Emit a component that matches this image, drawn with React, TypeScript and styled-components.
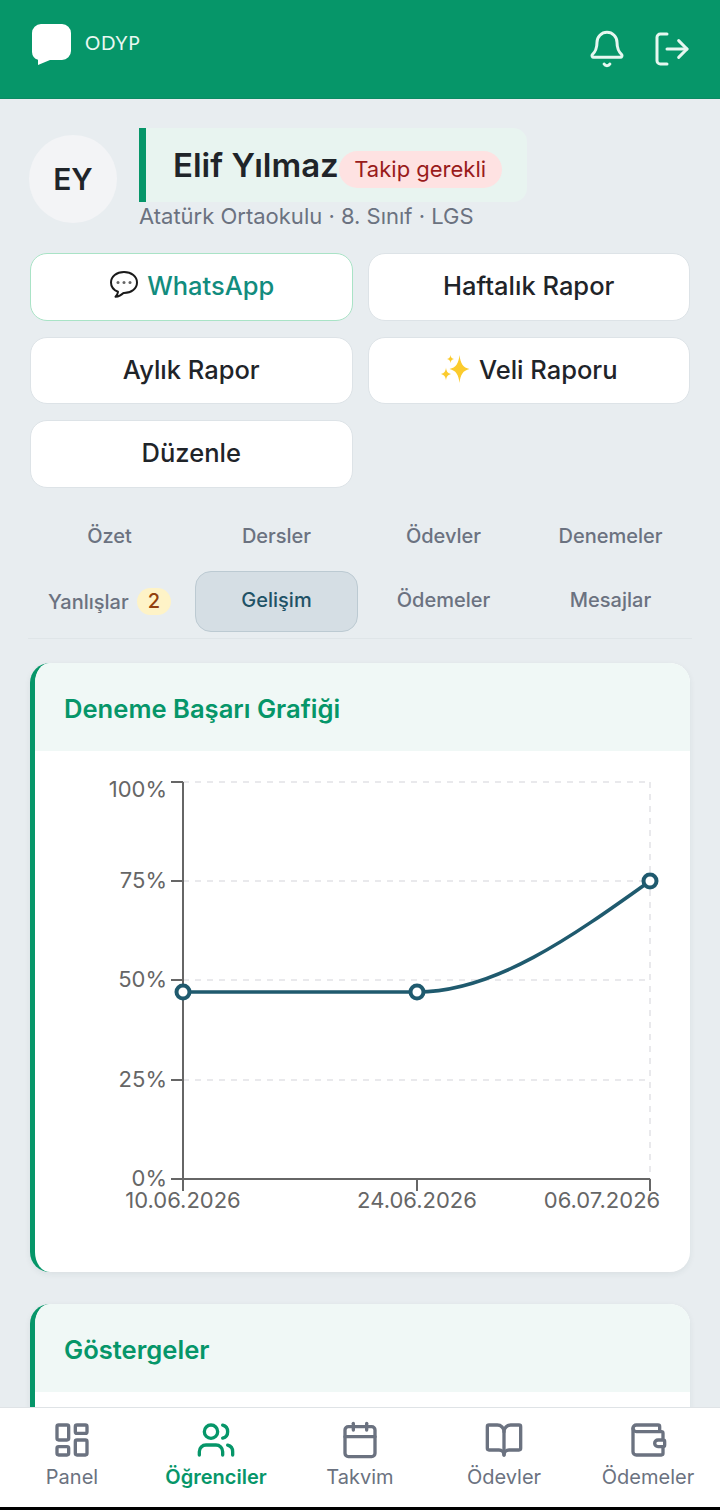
import React from "react";
import styled, { createGlobalStyle } from "styled-components";
import {
  Bell,
  BookOpen,
  Calendar,
  LayoutDashboard,
  LogOut,
  Users,
  Wallet,
} from "lucide-react";

const GlobalStyle = createGlobalStyle`
  html, body {
    margin: 0;
    padding: 0;
    background: #000;
  }

  * {
    box-sizing: border-box;
  }

  body {
    font-family: Inter, "Noto Sans", sans-serif;
    color: #1f2429;
  }
`;

const Page = styled.div`
  position: relative;
  height: 1507px;
  overflow: hidden;
  background: #e8edf0;
`;

const Header = styled.header`
  display: flex;
  align-items: center;
  justify-content: space-between;
  height: 99px;
  padding: 0 28px 0 32px;
  background: #069669;
  border-bottom: 1px solid #0b8a63;
`;

const Brand = styled.div`
  display: flex;
  align-items: flex-start;
  gap: 14px;
  height: 64px;
  margin-top: 4px;
  padding-top: 5px;
`;

const BrandName = styled.span`
  margin-top: 7px;
  font-family: Lato, sans-serif;
  font-size: 19px;
  line-height: 24px;
  letter-spacing: 0.8px;
  color: #e9f8f2;
`;

const HeaderActions = styled.div`
  display: flex;
  gap: 25px;
  color: #e6f7f0;
`;

const Main = styled.main`
  padding: 29px 30px 0;
`;

const Profile = styled.section`
  display: flex;
  gap: 22px;
`;

const Avatar = styled.div`
  display: flex;
  flex: none;
  align-items: center;
  justify-content: center;
  width: 88px;
  height: 88px;
  margin-top: 7px;
  margin-left: -1px;
  border-radius: 50%;
  background: #f3f4f6;
  font-size: 30px;
  font-weight: 600;
  color: #1f2429;
`;

const ProfileText = styled.div`
  display: flex;
  flex-direction: column;
  align-items: flex-start;
`;

const NameBanner = styled.div`
  display: flex;
  align-items: center;
  width: 388px;
  height: 74px;
  padding-left: 27px;
  background: #e8f4f0;
  border-left: 7px solid #069669;
  border-radius: 0 14px 14px 0;
`;

const Name = styled.h1`
  margin: 0;
  font-size: 33px;
  font-weight: 600;
  line-height: 40px;
  color: #1f2429;
`;

const StatusBadge = styled.span`
  margin-top: 8px;
  padding: 0 15.5px;
  font-size: 22px;
  line-height: 37px;
  color: #991b1b;
  background: #fee2e2;
  border-radius: 19px;
`;

const ProfileMeta = styled.p`
  margin: 1px 0 0;
  font-size: 22px;
  line-height: 27px;
  color: #6b7280;
`;

const ActionGrid = styled.div`
  display: grid;
  grid-template-columns: repeat(2, 1fr);
  gap: 16px 15px;
  margin-top: 23px;
`;

const ActionButton = styled.button<{ $whatsapp?: boolean }>`
  display: flex;
  align-items: center;
  justify-content: center;
  gap: 8px;
  height: 67.5px;
  padding: 0 0 2px;
  font-family: inherit;
  font-size: 25.5px;
  font-weight: 500;
  color: ${(p) => (p.$whatsapp ? "#128c7e" : "#1f2429")};
  background: #fff;
  border: 1.5px solid ${(p) => (p.$whatsapp ? "#a9e3c6" : "#dde3e7")};
  border-radius: 17px;
`;

const TabGrid = styled.nav`
  display: grid;
  grid-template-columns: repeat(4, 163px);
  grid-auto-rows: 61px;
  gap: 3px 4px;
  margin: 19px -2px 0;
  padding-bottom: 6px;
  border-bottom: 1px solid #dfe5e8;
`;

const Tab = styled.div<{ $active?: boolean }>`
  display: flex;
  align-items: center;
  justify-content: center;
  gap: 8px;
  padding-bottom: 2px;
  font-size: 20px;
  font-weight: 500;
  color: ${(p) => (p.$active ? "#1f5266" : "#6b7280")};
  background: ${(p) => (p.$active ? "#d5dee4" : "transparent")};
  border: 1.5px solid ${(p) => (p.$active ? "#bccad2" : "transparent")};
  border-radius: 16px;
`;

const TabCount = styled.span`
  margin-top: 2px;
  padding: 0 11px;
  font-size: 20px;
  line-height: 27px;
  color: #92400e;
  background: #fef3c7;
  border-radius: 14px;
`;

const TabLabelLow = styled.span`
  margin-top: 4px;
`;

const Card = styled.section`
  margin-top: 24px;
  overflow: hidden;
  background: #fff;
  border-left: 5px solid #069669;
  border-radius: 20px;
  box-shadow: 0 2px 6px rgba(30, 50, 60, 0.07);

  & + & {
    margin-top: 32px;
  }
`;

const CardHeader = styled.div`
  display: flex;
  align-items: center;
  height: 88px;
  padding: 4px 0 0 29px;
  background: #f0f8f6;
`;

const CardTitle = styled.h2`
  margin: 0;
  font-size: 25.6px;
  font-weight: 600;
  color: #069669;
`;

const Chart = styled.svg`
  display: block;
  font-family: Inter, sans-serif;
  font-size: 22px;
`;

const CardFiller = styled.div`
  height: 180px;
`;

const BottomNav = styled.nav`
  position: absolute;
  right: 0;
  bottom: 0;
  left: 0;
  display: grid;
  grid-template-columns: repeat(5, 1fr);
  height: 100px;
  padding-top: 12px;
  background: #fff;
  border-top: 1.5px solid #dfe3e6;
`;

const NavItem = styled.div<{ $active?: boolean }>`
  display: flex;
  flex-direction: column;
  align-items: center;
  gap: 5px;
  font-size: 20px;
  font-weight: ${(p) => (p.$active ? 600 : 400)};
  line-height: 24px;
  color: ${(p) => (p.$active ? "#069669" : "#6b7280")};
`;

// chart geometry, in the svg's own pixels
const axisX = 148;
const axisRight = 615;
const axisTop = 31;
const axisBottom = 428;
const yTicks = [
  { label: "100%", y: 31, labelY: 46 },
  { label: "75%", y: 130, labelY: 137 },
  { label: "50%", y: 229, labelY: 236 },
  { label: "25%", y: 329, labelY: 336 },
  { label: "0%", y: 428, labelY: 435 },
];
const xTicks = [
  { label: "10.06.2026", x: 148, labelX: 148 },
  { label: "24.06.2026", x: 382, labelX: 382 },
  { label: "06.07.2026", x: 615, labelX: 567 },
];
const points = [
  [148, 241],
  [382, 241],
  [615, 130],
];

const ProgressChart = () => (
  <Chart width={655} height={521} viewBox="0 0 655 521">
    <g stroke="#e9e9ec" strokeWidth="2" strokeDasharray="6 6">
      {yTicks.slice(0, 4).map((t) => (
        <line key={t.y} x1={axisX} x2={axisRight} y1={t.y} y2={t.y} />
      ))}
      <line x1={axisRight} x2={axisRight} y1={axisTop} y2={axisBottom} />
    </g>
    <g stroke="#666" strokeWidth="2">
      <line x1={axisX} x2={axisX} y1={axisTop} y2={axisBottom} />
      <line x1={axisX} x2={axisRight} y1={axisBottom} y2={axisBottom} />
      {yTicks.map((t) => (
        <line key={t.y} x1={axisX - 12} x2={axisX} y1={t.y} y2={t.y} />
      ))}
      {xTicks.map((t) => (
        <line key={t.x} x1={t.x} x2={t.x} y1={axisBottom} y2={axisBottom + 12} />
      ))}
    </g>
    <g fill="#666">
      {yTicks.map((t) => (
        <text key={t.y} x={axisX - 16} y={t.labelY} textAnchor="end">
          {t.label}
        </text>
      ))}
      {xTicks.map((t) => (
        <text key={t.x} x={t.labelX} y={axisBottom + 29} textAnchor="middle">
          {t.label}
        </text>
      ))}
    </g>
    <path
      d="M148 241 L382 241 C459.700 241 537.300 185.500 615 130"
      fill="none"
      stroke="#1f5a6e"
      strokeWidth="3.5"
    />
    {points.map(([x, y]) => (
      <circle key={x} cx={x} cy={y} r="6.500" fill="#fff" stroke="#1f5a6e" strokeWidth="4" />
    ))}
  </Chart>
);

const LogoMark = () => (
  <svg width="39" height="41" viewBox="0 0 39 41" fill="#fff">
    <path d="M9 0h21a9 9 0 0 1 9 9v18a9 9 0 0 1-9 9H18L6 41v-5.2A9 9 0 0 1 0 27V9a9 9 0 0 1 9-9z" />
  </svg>
);

const BalloonEmoji = () => (
  <svg width="31" height="31" viewBox="0 0 31 31">
    <path
      d="M16 2C8.500 2 3 6.500 3 12.500c0 4.200 2.800 7.600 7 9.300-.2 1.700-1 3.500-2.500 5 3-.3 6-1.800 8-3.800h.5c7.500 0 13-4.500 13-10.500S23.500 2 16 2z"
      fill="#fff"
      stroke="#1a1a1a"
      strokeWidth="2"
      strokeLinejoin="round"
    />
    <circle cx="10" cy="12.500" r="1.500" fill="#666" />
    <circle cx="16" cy="12.500" r="1.500" fill="#666" />
    <circle cx="22" cy="12.500" r="1.500" fill="#666" />
  </svg>
);

const SparklesEmoji = () => (
  <svg width="31" height="29" viewBox="0 0 31 29" fill="#fbcb2d">
    <path d="M19.500 0c1 8.500 3.500 12.500 10 14-6.500 1.500-9 5.500-10 14-1-8.500-3.500-12.500-10-14 6.500-1.500 9-5.500 10-14z" />
    <path d="M10.500 0c.4 2.600 1.300 3.500 3.500 4-2.200.5-3.100 1.400-3.500 4-.4-2.600-1.300-3.500-3.500-4 2.200-.5 3.100-1.400 3.500-4z" />
    <path d="M6 12.500c.5 4 1.500 5.500 5 6.500-3.500 1-4.500 2.500-5 6.500-.5-4-1.500-5.500-5-6.500 3.500-1 4.500-2.500 5-6.500z" />
  </svg>
);

const navItems = [
  { label: "Panel", Icon: LayoutDashboard },
  { label: "Öğrenciler", Icon: Users, active: true },
  { label: "Takvim", Icon: Calendar },
  { label: "Ödevler", Icon: BookOpen },
  { label: "Ödemeler", Icon: Wallet },
];

export default function App() {
  return (
    <Page>
      <GlobalStyle />
      <Header>
        <Brand>
          <LogoMark />
          <BrandName>ODYP</BrandName>
        </Brand>
        <HeaderActions>
          <Bell size={40} strokeWidth={1.8} />
          <LogOut size={40} strokeWidth={1.8} />
        </HeaderActions>
      </Header>

      <Main>
        <Profile>
          <Avatar>EY</Avatar>
          <ProfileText>
            <NameBanner>
              <Name>Elif Yılmaz</Name>
              <StatusBadge>Takip gerekli</StatusBadge>
            </NameBanner>
            <ProfileMeta>Atatürk Ortaokulu · 8. Sınıf · LGS</ProfileMeta>
          </ProfileText>
        </Profile>

        <ActionGrid>
          <ActionButton $whatsapp>
            <BalloonEmoji />
            WhatsApp
          </ActionButton>
          <ActionButton>Haftalık Rapor</ActionButton>
          <ActionButton>Aylık Rapor</ActionButton>
          <ActionButton>
            <SparklesEmoji />
            Veli Raporu
          </ActionButton>
          <ActionButton>Düzenle</ActionButton>
        </ActionGrid>

        <TabGrid>
          <Tab>Özet</Tab>
          <Tab>Dersler</Tab>
          <Tab>Ödevler</Tab>
          <Tab>Denemeler</Tab>
          <Tab>
            <TabLabelLow>Yanlışlar</TabLabelLow>
            <TabCount>2</TabCount>
          </Tab>
          <Tab $active>Gelişim</Tab>
          <Tab>Ödemeler</Tab>
          <Tab>Mesajlar</Tab>
        </TabGrid>

        <Card>
          <CardHeader>
            <CardTitle>Deneme Başarı Grafiği</CardTitle>
          </CardHeader>
          <ProgressChart />
        </Card>

        <Card>
          <CardHeader>
            <CardTitle>Göstergeler</CardTitle>
          </CardHeader>
          <CardFiller />
        </Card>
      </Main>

      <BottomNav>
        {navItems.map(({ label, Icon, active }) => (
          <NavItem key={label} $active={active}>
            <Icon size={40} strokeWidth={2} />
            {label}
          </NavItem>
        ))}
      </BottomNav>
    </Page>
  );
}
